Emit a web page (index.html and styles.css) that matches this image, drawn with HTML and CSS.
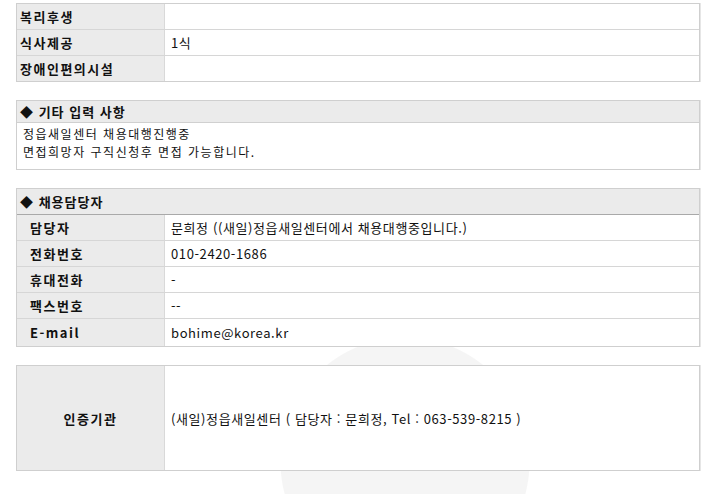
FILE: index.html
```html
<!DOCTYPE html>
<html lang="ko">
<head>
<meta charset="utf-8">
<link rel="stylesheet" href="styles.css">
</head>
<body>
<div class="watermark"></div>
<div class="page">
  <div class="grid">
    <div class="row"><div class="lbl">복리후생</div><div class="val"></div></div>
    <div class="row"><div class="lbl">식사제공</div><div class="val">1식</div></div>
    <div class="row"><div class="lbl">장애인편의시설</div><div class="val"></div></div>
  </div>

  <section class="box">
    <div class="box-head">◆ 기타 입력 사항</div>
    <div class="box-body">정읍새일센터 채용대행진행중<br>면접희망자 구직신청후 면접 가능합니다.</div>
  </section>

  <section class="box">
    <div class="box-head head2">◆ 채용담당자</div>
    <div class="row first"><div class="lbl ind">담당자</div><div class="val">문희정 ((새일)정읍새일센터에서 채용대행중입니다.)</div></div>
    <div class="row"><div class="lbl ind">전화번호</div><div class="val">010-2420-1686</div></div>
    <div class="row"><div class="lbl ind">휴대전화</div><div class="val">-</div></div>
    <div class="row"><div class="lbl ind">팩스번호</div><div class="val">--</div></div>
    <div class="row last"><div class="lbl ind">E-mail</div><div class="val">bohime@korea.kr</div></div>
  </section>

  <div class="grid cert">
    <div class="row tall"><div class="lbl center">인증기관</div><div class="val">(새일)정읍새일센터 ( 담당자 : 문희정, Tel : 063-539-8215 )</div></div>
  </div>
</div>
</body>
</html>
```
FILE: styles.css
```css
html, body { margin: 0; padding: 0; background: #fff; overflow: hidden; }
body {
  font-family: "Noto Sans CJK KR", "Liberation Sans", sans-serif;
  font-size: 13px;
  color: #111;
  position: relative;
  width: 714px;
  height: 494px;
}
* { box-sizing: border-box; }
.watermark {
  position: absolute;
  left: 280px;
  top: 337px;
  width: 250px;
  height: 157px;
  background: radial-gradient(circle at 125px 125px, #f5f5f5 0, #f5f5f5 124px, rgba(255,255,255,0) 125px);
  z-index: 0;
}
.page {
  position: relative;
  z-index: 1;
  padding: 3px 0 0 16px;
  width: 700px;
  display: flex;
  flex-direction: column;
  gap: 18px;
}
.grid, .box {
  width: 684px;
  background: #fff;
  border: 1px solid #cfcfcf;
  box-shadow: 1px 0 0 #e6e6e6;
}
.row {
  display: flex;
  height: 26px;
  border-top: 1px solid #d6d6d6;
}
.grid .row:first-child, .row.first { border-top: none; height: 25px; }
.row.last { height: 28px; }
.grid .row.tall { height: 104px; }
.lbl {
  flex: 0 0 148px;
  background: #ebebeb;
  font-weight: bold;
  letter-spacing: 1.5px;
  padding-left: 3px;
  border-right: 1px solid #d9d9d9;
  display: flex;
  align-items: center;
  line-height: 15px;
}
.val {
  flex: 1;
  padding-left: 6px;
  display: flex;
  align-items: center;
  line-height: 15px;
  letter-spacing: 0.6px;
}
.ind { padding-left: 13px; }
.center { justify-content: center; padding-left: 0; }
.box-head {
  background: #ebebeb;
  height: 21px;
  line-height: 21px;
  padding-left: 3px;
  font-weight: bold;
  letter-spacing: 1px;
}
.box-body {
  border-top: 1px solid #d0d0d0;
  padding: 2px 6px 0 6px;
  font-size: 12px;
  line-height: 18px;
  height: 47px;
  letter-spacing: 1.5px;
}
.head2 {
  height: 26px;
  line-height: 25px;
  border-bottom: 1px solid #a9a9a9;
}
```
